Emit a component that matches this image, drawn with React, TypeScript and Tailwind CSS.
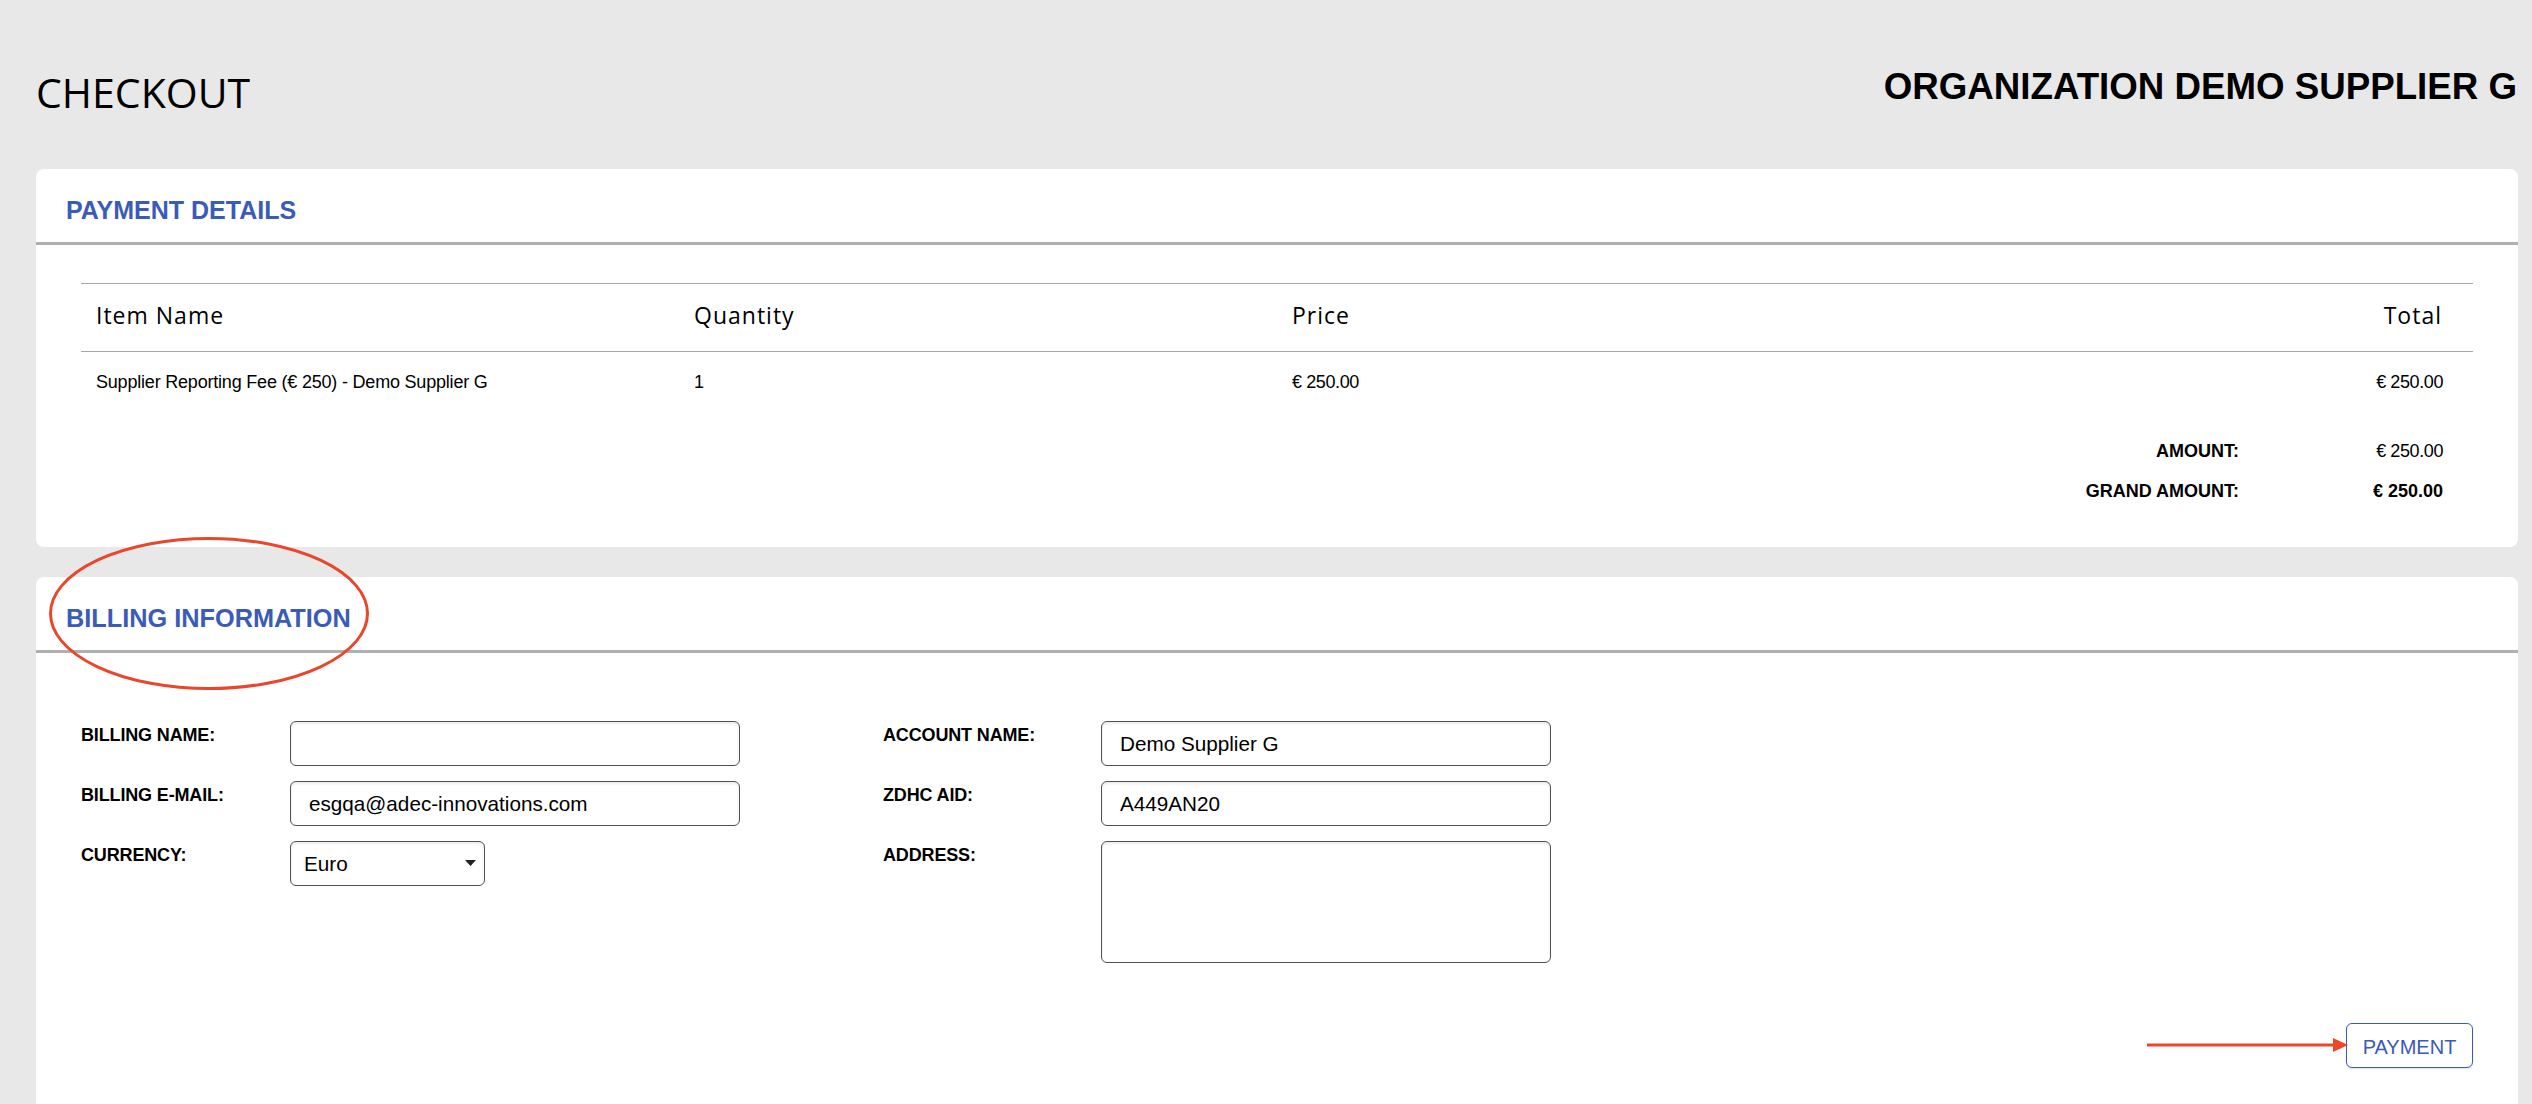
export default function App() {
  const sans = "font-['Liberation_Sans',Arial,sans-serif]";
  const hd = "font-['Open_Sans','Noto_Sans',sans-serif]";
  const label = "text-[18px] leading-[22px] font-bold text-black pt-[3px] tracking-[-0.15px]";
  const field =
    "block h-[45px] border border-[#505050] rounded-[6px] bg-white text-[20.7px] text-black outline-none shadow-[inset_0_2px_3px_rgba(0,0,0,0.08)] " +
    "font-['Liberation_Sans',Arial,sans-serif]";
  return (
    <div className={`relative h-[1104px] overflow-hidden bg-[#e8e8e8] pl-[36px] pr-[14px] ${sans}`}>
      <div className="flex h-[169px] items-start justify-between">
        <h1 className={`pt-[65px] text-[41px] leading-[54px] font-normal text-black ${hd}`}>CHECKOUT</h1>
        <div className="pt-[63px] pr-px text-[36.7px] leading-[48px] font-bold text-black">ORGANIZATION DEMO SUPPLIER G</div>
      </div>

      <section className="h-[378px] rounded-[8px] bg-white">
        <div className="flex h-[76px] items-center border-b-[3px] border-[#b0b0b0] pt-[10px] pl-[30px] text-[25px] font-bold text-[#3a5bb8]">
          PAYMENT DETAILS
        </div>
        <div className="mx-[45px] mt-[38px]">
          <div className={`grid h-[69px] grid-cols-[598px_598px_1fr_auto] items-center border-y border-[#a8a8a8] pr-[31px] pb-[5px] pl-[15px] text-[23px] tracking-[1px] text-black ${hd}`}>
            <span>Item Name</span>
            <span>Quantity</span>
            <span>Price</span>
            <span>Total</span>
          </div>
          <div className="grid h-[60px] grid-cols-[598px_598px_1fr_auto] items-center pr-[30px] pl-[15px] text-[18px] tracking-[-0.2px] text-black">
            <span>Supplier Reporting Fee (€ 250) - Demo Supplier G</span>
            <span>1</span>
            <span className="tracking-[-0.4px]">€ 250.00</span>
            <span className="tracking-[-0.4px]">€ 250.00</span>
          </div>
          <div className="mt-[28px] grid grid-cols-[1fr_204px] gap-y-[18px] pr-[30px] text-right text-[18px] leading-[22px] text-black">
            <span className="font-bold">AMOUNT:</span>
            <span className="tracking-[-0.4px]">€ 250.00</span>
            <span className="font-bold">GRAND AMOUNT:</span>
            <span className="font-bold">€ 250.00</span>
          </div>
        </div>
      </section>

      <section className="mt-[30px] h-[600px] rounded-[8px] bg-white">
        <div className="flex h-[76px] items-center border-b-[3px] border-[#b0b0b0] pt-[10px] pl-[30px] text-[25.3px] font-bold text-[#3a5bb8]">
          BILLING INFORMATION
        </div>
        <div className="ml-[45px] mt-[68px] flex items-start">
          <div className="grid w-[659px] grid-cols-[209px_450px] gap-y-[15px]">
            <label className={label}>BILLING NAME:</label>
            <input readOnly value="" className={`${field} w-full px-[18px]`} />
            <label className={label}>BILLING E-MAIL:</label>
            <input readOnly value="esgqa@adec-innovations.com" className={`${field} w-full px-[18px]`} />
            <label className={label}>CURRENCY:</label>
            <div className="relative w-[195px]">
              <select defaultValue="Euro" className={`${field} w-full appearance-none pl-[13px]`}>
                <option>Euro</option>
              </select>
              <svg viewBox="0 0 12 8" preserveAspectRatio="none" className="pointer-events-none absolute top-[19px] right-[9px] h-[6px] w-[11px]">
                <path d="M0 0h12L6 8z" fill="#222" />
              </svg>
            </div>
          </div>
          <div className="ml-[143px] grid w-[668px] grid-cols-[218px_450px] gap-y-[15px]">
            <label className={label}>ACCOUNT NAME:</label>
            <input readOnly value="Demo Supplier G" className={`${field} w-full px-[18px]`} />
            <label className={label}>ZDHC AID:</label>
            <input readOnly value="A449AN20" className={`${field} w-full px-[18px]`} />
            <label className={label}>ADDRESS:</label>
            <textarea readOnly value="" className={`${field} !h-[122px] w-full resize-none`} />
          </div>
        </div>
        <div className="mt-[60px] mr-[45px] flex justify-end">
          <button className="h-[45px] w-[127px] rounded-[6px] border border-[#3a5bb8] bg-white pt-[2px] text-[20px] text-[#3a5bb8] shadow-[0_1px_2px_rgba(0,0,0,0.12)]">
            PAYMENT
          </button>
        </div>
      </section>

      <svg viewBox="0 0 320 153" className="pointer-events-none absolute top-[537px] left-[49px] h-[153px] w-[320px]">
        <ellipse cx="160" cy="76.5" rx="158.5" ry="75" fill="none" stroke="#e8472b" strokeWidth="3" />
      </svg>
      <svg viewBox="0 0 201 16" className="pointer-events-none absolute top-[1037px] left-[2147px] h-[16px] w-[201px]">
        <path d="M0 8h190" stroke="#ee4626" strokeWidth="3" fill="none" />
        <path d="M186 1l15 7-15 7z" fill="#ee4626" />
      </svg>
    </div>
  );
}
